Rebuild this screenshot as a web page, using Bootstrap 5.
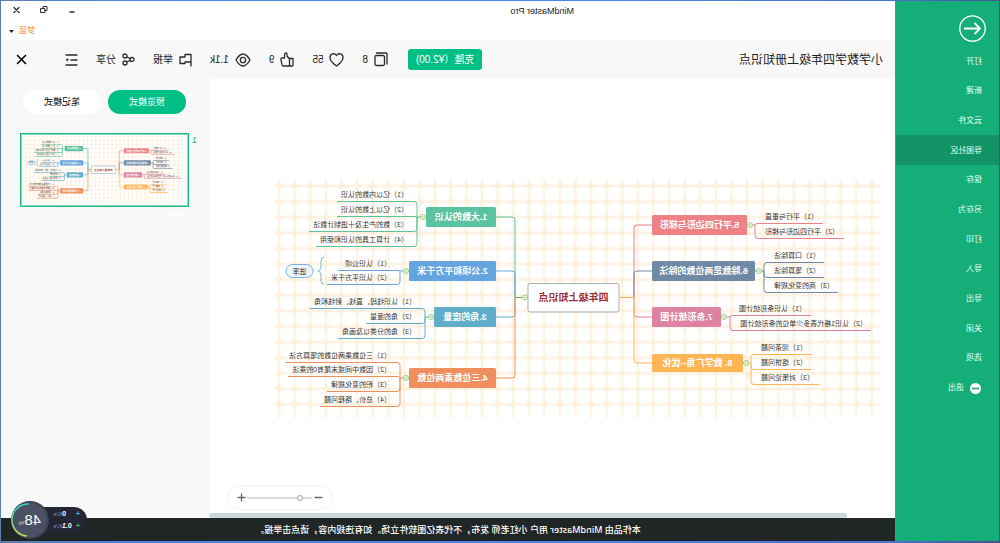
<!DOCTYPE html>
<html lang="zh-CN">
<head>
<meta charset="utf-8">
<meta name="viewport" content="width=device-width, initial-scale=1">
<title>MindMaster Pro</title>
<link href="https://cdn.jsdelivr.net/npm/bootstrap@5.3.0/dist/css/bootstrap.min.css" rel="stylesheet">
<style>
  body{font-family:"Liberation Sans","Noto Sans CJK SC",sans-serif;font-size:10px;line-height:14px;color:#222;background:#4a7ff0}
  button,input{font:inherit}
  /* the whole desktop is shown flipped left to right */
  .desktop{height:100vh;min-height:500px;padding:1px 1px 2px;transform:scaleX(-1);
    background:linear-gradient(90deg,#48508f,#4d74d8 12%,#4a86ee 50%,#4c7fe0 90%,#5b7fa8)}
  .rail{width:104px;background:#16ae78;border-right:1px solid #0cc07b}
  .rail .back{width:27px;height:27px;margin:14px 0 0 13px}
  .menu{display:grid;grid-auto-rows:1fr;height:356px;margin-top:4px;font-size:8px;line-height:12px}
  .menu a{color:#e6fff4;padding:2px 0 0 17px;text-decoration:none;height:100%;display:flex;align-items:center;gap:6px}
  .menu a.active{background:#129466}
  .plain{border:0;background:none;padding:0;color:inherit;display:flex;align-items:center;gap:6px}
  svg{display:block}
  .ico{fill:none;stroke:#2a2a2a;stroke-width:1.3;stroke-linecap:round;stroke-linejoin:round}
  .titlebar{height:39px;font-size:9px}
  .titlebar .app{left:321px;top:3px}
  .controls{right:10px;top:3px;gap:18px}
  .user{right:8px;top:23px;gap:5px;color:#ff8d25;font-size:8px}
  .tools{height:39px;background:#f8f8f8;padding:0 15px 0 12px}
  .tools h1{font-size:12px;line-height:18px;margin:0;font-weight:400;width:401px}
  .counts{margin-left:20px}
  .leave{margin-left:20px}
  .clone{width:74px;height:21px;border:0;border-radius:3px;background:#00bf85;color:#fff;padding:0}
  .stage{overflow:hidden}
  .zoomer{width:106px;height:25px;right:18px;bottom:8px;border:1px solid #f3f3f3;border-radius:13px;background:#fff;padding:0 9px}
  .zoomer input{appearance:none;width:65px;height:8px;background:none;margin:0}
  .zoomer input::-webkit-slider-runnable-track{height:2px;background:#dcdcdc}
  .zoomer input::-webkit-slider-thumb{appearance:none;width:6px;height:6px;margin-top:-2px;border:1px solid #999;border-radius:50%;background:#fff}
  .track{height:5px;padding-left:48px}
  .track div{height:5px;background:#ccd8d7;border-radius:2px}
  .side{width:208px;background:#f8f8f8;padding:11px 22px 0 23px}
  .pill{width:78px;height:24px;border:0;border-radius:12px;background:#fff;padding:0;font-size:9px}
  .pill.on{background:#00bf85;color:#fff}
  .thumbrow{margin:19px 0 0 -11px;gap:3px;font-size:9px;color:#16b97f}
  .thumb{width:169px;height:74px;border:1px solid #16b97f;outline:1px solid #8fdcc0;outline-offset:-2px;background:#fff;padding:1px}
  .page{color:#fff}
  .notice{height:23px;background:#202526;color:#fff;font-family:"Noto Sans","Noto Sans CJK SC",sans-serif;font-size:9px;font-weight:500}
  .meter{right:11px;bottom:4px}
  .speeds{width:57px;height:26px;margin-right:-19px;border-radius:13px;background:#252634;color:#fff;font-size:7px;line-height:12px;padding:1px 0 0 7px}
  .speeds small{color:#8d8f9c;font-size:6px}
  .speeds span{width:8px;font-weight:700}
  .speeds b{width:10px;text-align:right}
  .load{width:38px;height:38px}
</style>
</head>
<body>
<div class="desktop d-flex">
  <nav class="rail flex-shrink-0">
    <button class="plain back" aria-label="返回"><svg width="27" height="27" viewBox="0 0 27 27" fill="none" stroke="#fff" stroke-width="1.3"><circle cx="13.5" cy="13.5" r="12.7"/><path d="M22 13.500H6M11.500 8l-5.500 5.500 5.500 5.500" stroke-width="1.800"/></svg></button>
    <div class="menu">
      <a href="#">打开</a><a href="#">新建</a><a href="#">云文件</a><a href="#" class="active">导图社区</a><a href="#">保存</a><a href="#">另存为</a><a href="#">打印</a><a href="#">导入</a><a href="#">导出</a><a href="#">关闭</a><a href="#">选项</a>
      <a href="#"><svg width="12" height="11" viewBox="0 0 12 11"><circle cx="6.500" cy="5.500" r="5.500" fill="#fff"/><path d="M3 5.500h7" stroke="#16ae78" stroke-width="1.600"/></svg>退出</a>
    </div>
  </nav>

  <div class="flex-fill d-flex flex-column bg-white" style="min-width:0">
    <header class="titlebar position-relative flex-shrink-0">
      <span class="app position-absolute">MindMaster Pro</span>
      <div class="controls position-absolute d-flex">
        <button class="plain" aria-label="最小化"><svg class="ico" width="10" height="12" viewBox="0 0 10 12"><path d="M3 8h4"/></svg></button>
        <button class="plain" aria-label="还原"><svg class="ico" width="10" height="12" viewBox="0 0 10 12" style="stroke-width:1"><path d="M4.500 4.500h4v4h-4zM6 4V2.500H2v4h2"/></svg></button>
        <button class="plain" aria-label="关闭"><svg class="ico" width="10" height="12" viewBox="0 0 10 12"><path d="M2 3.500l5 5M7 3.500l-5 5"/></svg></button>
      </div>
      <button class="plain user position-absolute">梦蓝<svg width="5" height="3" viewBox="0 0 5 3"><path d="M0 0h5L2.500 3z" fill="#223"/></svg></button>
    </header>

    <div class="tools d-flex align-items-center flex-shrink-0">
      <h1>小学数学四年级上册知识点</h1>
      <button class="clone">克隆（¥2.00)</button>
      <div class="counts d-flex flex-fill justify-content-between align-items-center">
        <button class="plain" aria-label="克隆 8"><svg class="ico" width="14" height="15" viewBox="0 0 14 15"><rect x="3.500" y="3.500" width="9.500" height="10" rx="1.500"/><path d="M1 12V2q0-1 1-1h9.500"/></svg>8</button>
        <button class="plain" aria-label="喜欢 55"><svg class="ico" width="15" height="15" viewBox="0 0 15 15"><path d="M7.500 14C5 12 1 9.500 1 5.500 1 1.500 5.500.5 7.500 3.500 9.500.5 14 1.500 14 5.500c0 4-4 6.500-6.500 8.500z"/></svg>55</button>
        <button class="plain" aria-label="点赞 9"><svg class="ico" width="14" height="15" viewBox="0 0 14 15"><path d="M1 6.500h3.500V14H2q-1 0-1-1zM4.500 7L7 4V2q0-1 1-1 1.500 0 1.500 2v3H12q1.300 0 1 1.500l-1 5.500q-.2 1-1.500 1h-6"/></svg>9</button>
        <button class="plain" aria-label="浏览 1.1k"><svg class="ico" width="16" height="14" viewBox="0 0 16 14"><path d="M1 7q7-12 14 0-7 12-14 0z"/><circle cx="8" cy="7" r="2.700"/></svg>1.1k</button>
        <button class="plain"><svg class="ico" width="13" height="14" viewBox="0 0 13 14"><path d="M1 13V1.500h6V4h5v6.500H7V9H1"/></svg>举报</button>
        <button class="plain"><svg class="ico" width="13" height="13" viewBox="0 0 13 13"><circle cx="3" cy="6.500" r="2"/><circle cx="10" cy="3" r="2"/><circle cx="10" cy="10" r="2"/><path d="M5 5.500l3-1.500M5 7.500L8 9"/></svg>分享</button>
        <button class="plain" aria-label="大纲"><svg class="ico" width="13" height="12" viewBox="0 0 13 12"><path d="M1 1h11M1 6h6M1 11h11"/><path d="M9.500 5h2.500l-1.200 2z" fill="#2a2a2a" stroke-width=".5"/></svg></button>
        <button class="plain leave" aria-label="退出预览"><svg class="ico" width="11" height="11" viewBox="0 0 11 11" style="stroke:#000;stroke-width:1.600"><path d="M1.500 1.500l8 8M9.500 1.500l-8 8"/></svg></button>
      </div>
    </div>

    <div class="d-flex flex-fill" style="min-height:0">
      <main class="stage flex-fill d-flex flex-column position-relative">
        <div class="flex-fill overflow-hidden">
          <svg width="100%" viewBox="105 79 686 434">
            <defs>
              <pattern id="cells" x="120.300" y="178.300" width="15.600" height="15.600" patternUnits="userSpaceOnUse">
                <path d="M7.800 0v15.600M0 7.800h15.600" stroke="#fff3e4" stroke-width="2.200"/>
                <path d="M7.800 3.500v8.600M3.500 7.800h8.600" stroke="#fff0de" stroke-width="2.800"/>
              </pattern>
            </defs>
            <g id="map"><rect x="120" y="178.300" width="605" height="239" fill="url(#cells)"/></g>
          </svg>
        </div>
        <div class="track"><div></div></div>
        <div class="zoomer position-absolute d-flex align-items-center justify-content-between">
          <button class="plain" aria-label="缩小"><svg class="ico" width="9" height="9" viewBox="0 0 9 9" style="stroke:#666"><path d="M1 4.500h7"/></svg></button>
          <input type="range" min="0" max="100" value="16" aria-label="缩放">
          <button class="plain" aria-label="放大"><svg class="ico" width="9" height="9" viewBox="0 0 9 9" style="stroke:#666"><path d="M1 4.500h7M4.500 1v7"/></svg></button>
        </div>
      </main>
      <aside class="side flex-shrink-0">
        <div class="d-flex justify-content-between"><button class="pill on">预览模式</button><button class="pill">笔记模式</button></div>
        <div class="thumbrow d-flex justify-content-start">
          <span>1</span>
          <div><div class="thumb"><svg width="165" height="70" viewBox="107 165 630 267" stroke-width="2.500"><rect x="107" y="160" width="630" height="280" fill="url(#cells)"/><use href="#map"/></svg></div><div class="page">Page-1</div></div>
        </div>
      </aside>
    </div>
    <footer class="notice d-flex align-items-center justify-content-center flex-shrink-0">本作品由 MindMaster 用户 小红老师 发布，不代表亿图软件立场。如有违规内容，请点击举报。</footer>
  </div>

  <div class="meter position-absolute d-flex align-items-center">
    <div class="speeds"><div class="d-flex"><span style="color:#3fb4ff">+</span><b>0</b><small>K/s</small></div><div class="d-flex"><span style="color:#2fc43a">+</span><b>0.1</b><small>K/s</small></div></div>
    <svg class="load" viewBox="0 0 38 38"><defs><linearGradient id="lg" x2="0" y2="1"><stop stop-color="#36d0c8"/><stop offset="1" stop-color="#b6d957"/></linearGradient></defs><circle cx="19" cy="19" r="19" fill="#3d4254"/><circle cx="19" cy="19" r="17" fill="#4b5064"/><path d="M20 3a16 16 0 0 1 2 32" fill="none" stroke="url(#lg)" stroke-width="1.600"/><text x="8" y="24" font-size="15" fill="#fff">48</text><text x="25" y="24" font-size="6" fill="#ddd">%</text></svg>
  </div>
</div>
<script src="https://cdn.jsdelivr.net/npm/bootstrap@5.3.0/dist/js/bootstrap.bundle.min.js"></script>
<script>
// c colour, t title, b box [x, y, width, height], s side, k knob x, r trunk x
// l leaves: [text, text x, text centre y, outer end of underline]
const branches = [
 {c:'#5bc3a2',t:'1.大数的认识',b:[504,207,70,20],s:1,k:577,r:583,l:[['（1）亿以内数的认识',592,194,663],['（2）亿以上数的认识',592,209,663],['（3）数的产生及十进制计数法',592,224,691],['（4）计算工具的认识和使用',592,239,684]]},
 {c:'#64a4df',t:'2.公顷和平方千米',b:[504,261,87,20],s:1,k:594,r:600,l:[['（1）认识公顷',609,263,662],['（2）认识平方千米',609,277,673]]},
 {c:'#5fadc8',t:'3.角的度量',b:[504,307,62,20],s:1,k:569,r:575,l:[['（1）认识线段、直线、射线和角',584,301,690],['（2）角的度量',584,316,634],['（3）角的分类以及画角',584,331,662]]},
 {c:'#ef8f5f',t:'4.三位数乘两位数',b:[504,368,87,20],s:1,k:594,r:600,l:[['（1）三位数乘两位数的笔算方法',609,355,715],['（2）因数中间或末尾有0的乘法',609,369,712],['（3）积的变化规律',609,384,673],['（4）总价、路程问题',609,399,680]]},
 {c:'#ec8286',t:'5.平行四边形与梯形',b:[253,215,95,20],s:-1,k:250,r:245,l:[['（1）平行与垂直',182,216,177],['（2）平行四边形与梯形',161,231,156]]},
 {c:'#7089a6',t:'6.除数是两位数的除法',b:[245,261,103,20],s:-1,k:241,r:236,l:[['（1）口算除法',180,255,176],['（2）笔算除法',180,270,176],['（3）商的变化规律',166,285,162]]},
 {c:'#de82a3',t:'7.条形统计图',b:[279,307,69,20],s:-1,k:276,r:270,l:[['（1）认识条形统计图',194,308,189],['（2）认识1格代表多少单位的条形统计图',133,323,129]]},
 {c:'#ffb553',t:'8. 数学广角--优化',b:[257,354,91,18],s:-1,k:254,r:249,l:[['（1）沏茶问题',193,347,188],['（2）烙饼问题',193,362,188],['（3）对策论问题',186,377,181]]}
];
const link = (x,y,X,Y,c) => {
  const d = Math.sign(X-x), v = Math.sign(Y-y), q = Math.min(3,Math.abs(Y-y));
  return `<path d="M${x} ${y}V${Y-v*q}Q${x} ${Y} ${x+d*3} ${Y}H${X}" fill="none" stroke="${c}"/>`;
};
const knob = (x,y) => `<circle cx="${x}" cy="${y}" r="2.600" fill="#eaf7dc" stroke="#8cc97a" stroke-width=".8"/><path d="M${x-1.2} ${y}h2.4" stroke="#8cc97a" stroke-width=".7"/>`;
let out = '';
for (const n of branches) {
  const [x,y,w,h] = n.b, m = y+h/2, right = n.s > 0;
  out += link(right?485:366, 297.5, right?x:x+w, m, n.c);
  out += `<path d="M${right?x+w:x} ${m}H${n.r}" stroke="${n.c}"/>` + knob(n.k,m);
  for (const [t,tx,ty,end] of n.l)
    out += link(n.r,m,end,ty+7.5,n.c) + `<text x="${tx}" y="${ty+2.5}" font-size="7" fill="#333">${t}</text>`;
  out += `<rect x="${x}" y="${y}" width="${w}" height="${h}" rx="1.500" fill="${n.c}"/><text x="${x+w/2}" y="${m+3}" font-size="9" font-weight="700" fill="#fff" text-anchor="middle">${n.t}</text>`;
}
out += '<path d="M366 297.500h14" stroke="#f0b050"/><path d="M472 297.500h13" stroke="#7f9a60"/>' + knob(475,297.5);
out += '<rect x="381" y="283.500" width="91" height="28.500" rx="2" fill="#fff" stroke="#a9b1b1"/><text x="426.500" y="301" font-size="10" font-weight="600" fill="#9c2f38" text-anchor="middle">四年级上知识点</text>';
out += '<path d="M676 257q3 0 3 4v6q0 3 3 4-3 1-3 4v6q0 3-3 3" fill="none" stroke="#7ab3e3"/><rect x="687" y="264.500" width="27" height="13" rx="6.500" fill="#edf4fd" stroke="#7ab3e3"/><text x="700.500" y="273.500" font-size="7" fill="#333" text-anchor="middle">进率</text>';
document.getElementById('map').insertAdjacentHTML('beforeend', out);
</script>
</body>
</html>
